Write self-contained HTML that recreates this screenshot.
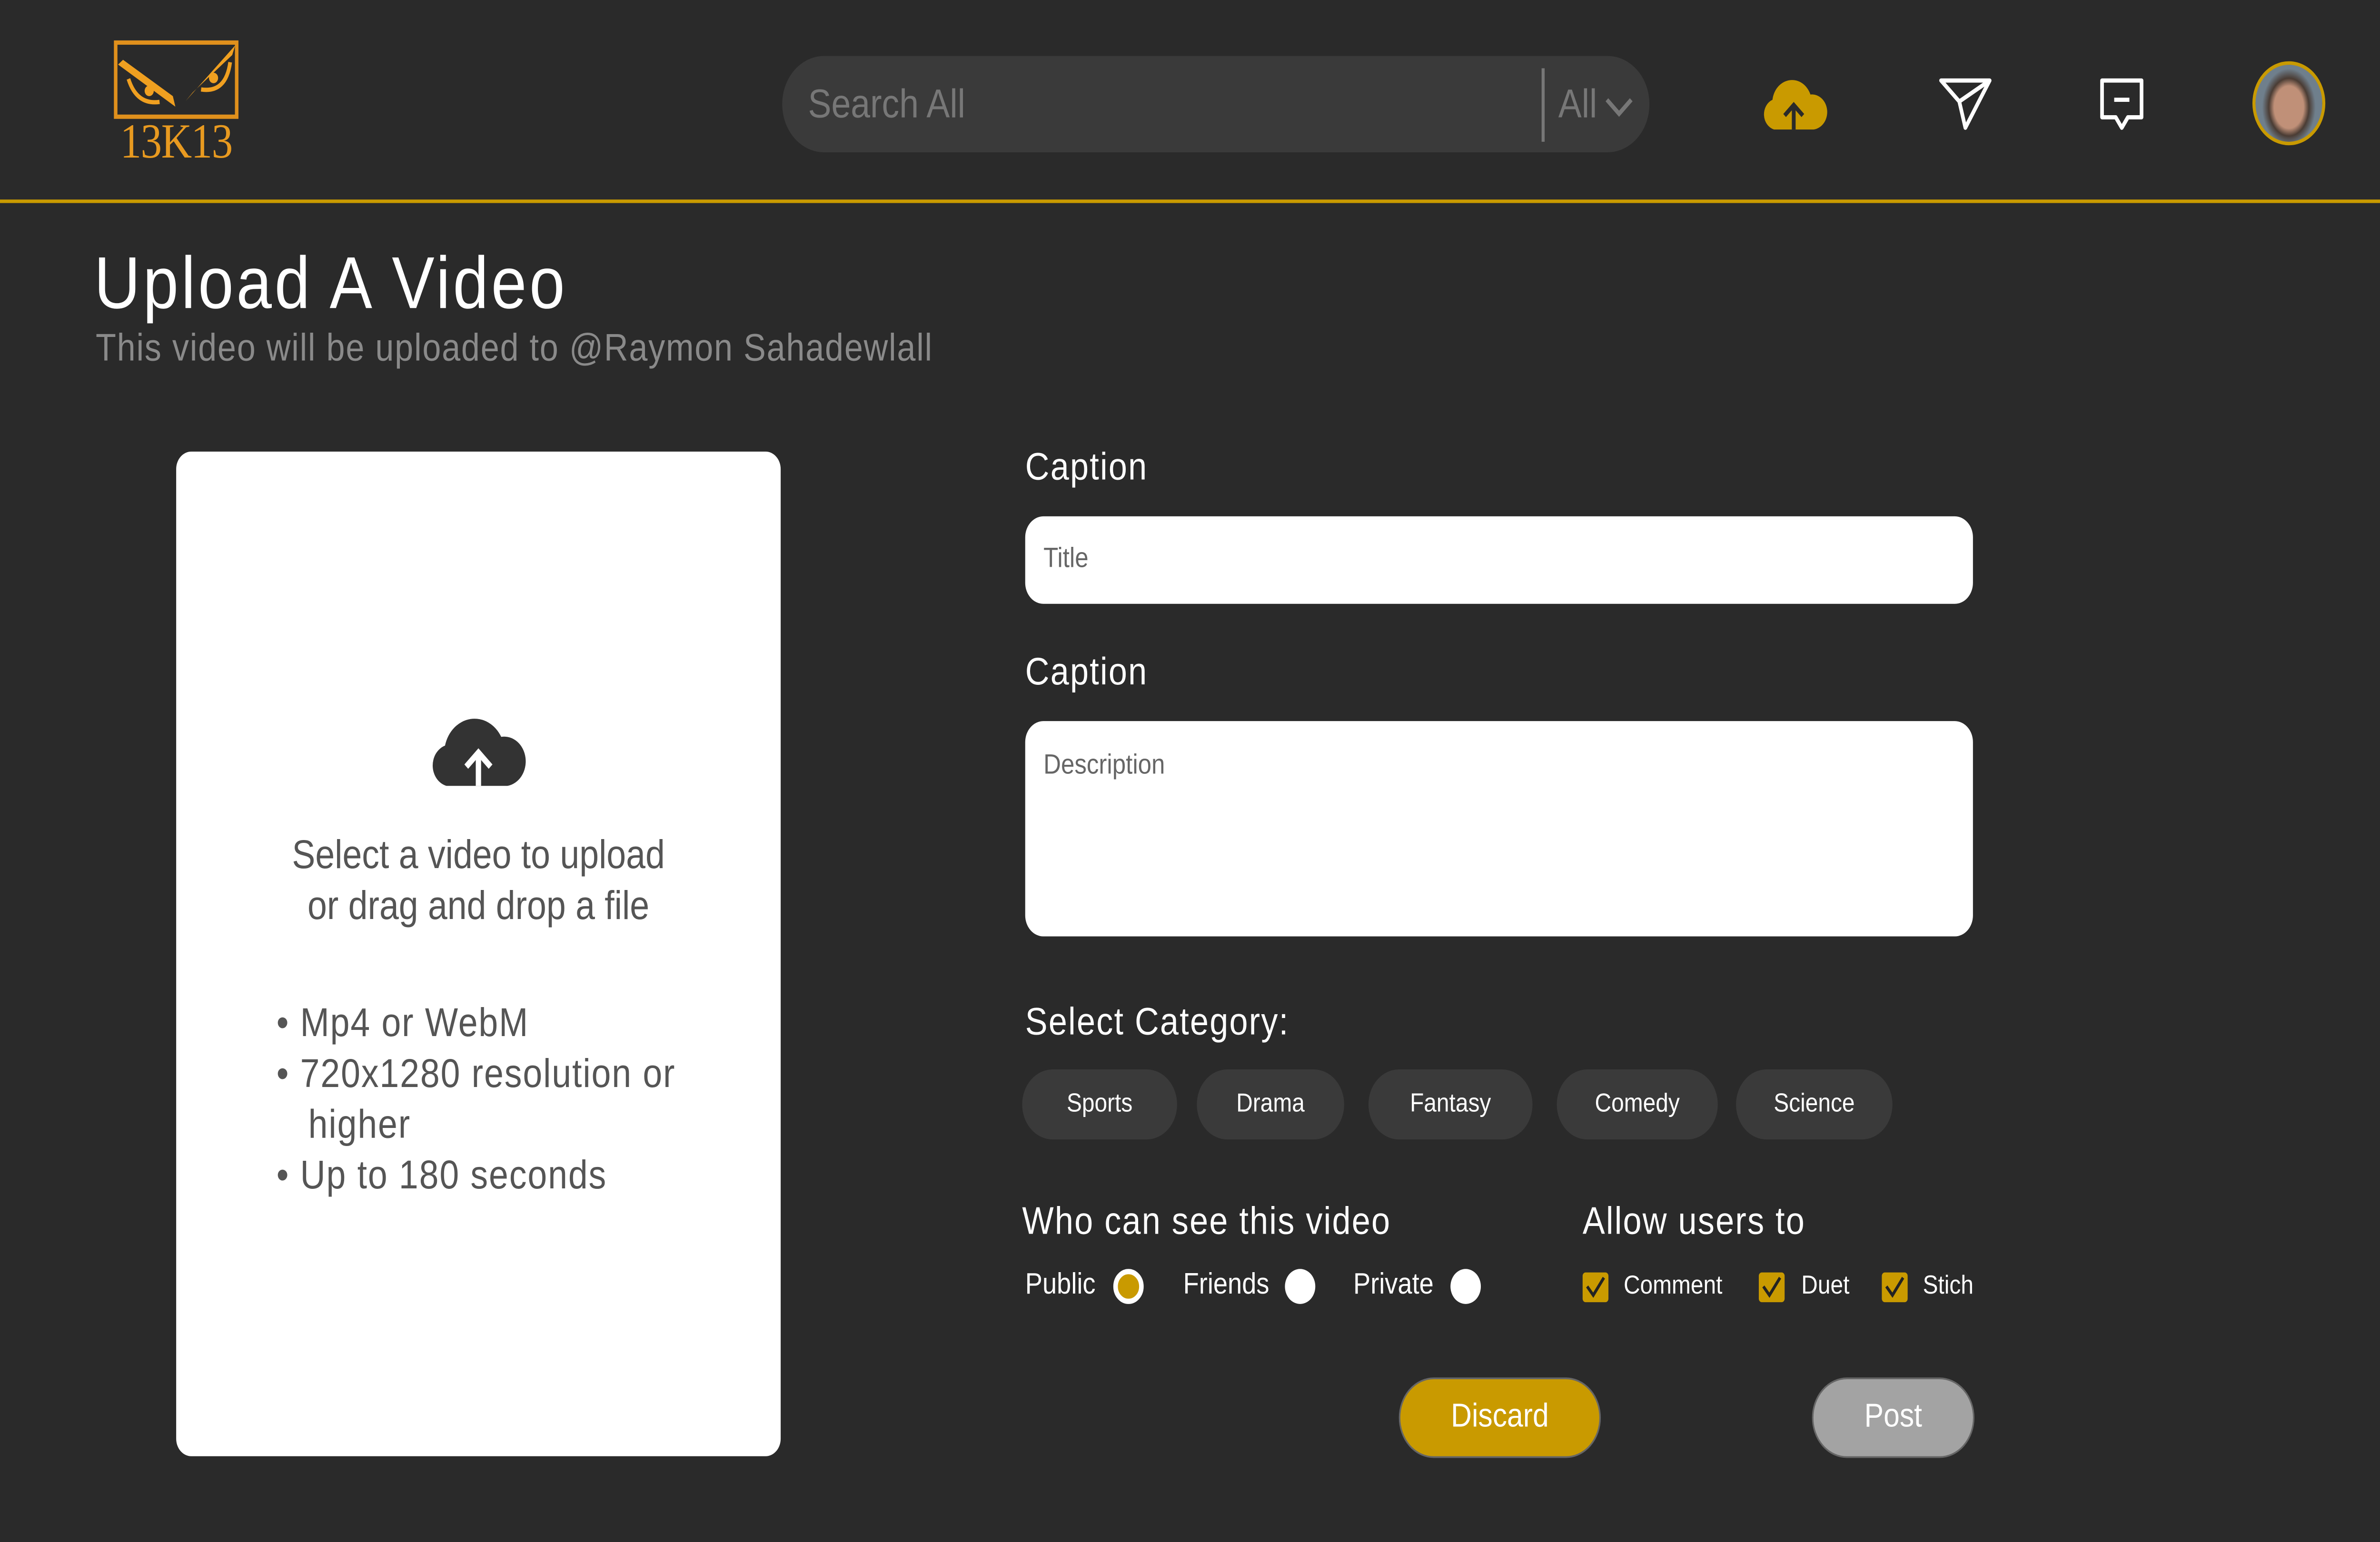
<!DOCTYPE html>
<html><head><meta charset="utf-8"><style>
html,body{margin:0;padding:0;background:#2a2a2a;overflow:hidden;width:100%;height:100%}
#w{width:1567px;height:881px;position:absolute;left:0;top:0;transform:scale(3.6796,3.6776);transform-origin:0 0;font-family:"Liberation Sans",sans-serif;color:#fff}
.a{position:absolute}
.chip{position:absolute;top:611px;height:40px;border-radius:20px;background:#3a3a3a;font-size:15px;line-height:40px;text-align:center}
.lbl{font-size:22px;letter-spacing:0.7px}
.rad{position:absolute;top:725px;width:20px;height:20px;border-radius:50%;background:#fff}
.cb{position:absolute;top:727px;width:17px;height:17px;background:#c99a00;border-radius:2px}
.cb svg{position:absolute;left:2px;top:2px}
.ct{position:absolute;top:726px;font-size:15px}
</style></head><body><div id="w">
<!-- header -->
<div class="a" style="left:0;top:114px;width:1567px;height:2px;background:#c99a00"></div>
<svg class="a" style="left:75px;top:23px" width="82" height="45" viewBox="0 0 300 163"><rect x="4" y="4" width="292" height="155" fill="none" stroke="#e0901c" stroke-width="9"/><path d="M10 50 L148 138 L142 116 L22 40 Z" fill="#f0a020"/><path d="M35 80 Q55 135 110 128" stroke="#f0a020" stroke-width="9" fill="none"/><circle cx="85" cy="105" r="11" fill="#f0a020"/><path d="M292 10 L173 126 L190 108 L285 30 Z" fill="#f0a020"/><path d="M280 45 Q270 110 210 102" stroke="#f0a020" stroke-width="9" fill="none"/><circle cx="240" cy="78" r="11" fill="#f0a020"/></svg>
<div class="a" style="left:74px;top:66px;width:84px;text-align:center;font-family:'Liberation Serif',serif;font-size:28px;color:#e89a20;letter-spacing:-0.5px">13K13</div>
<div class="a" style="left:515px;top:32px;width:571px;height:55px;border-radius:28px;background:#3a3a3a"></div>
<div class="a" style="left:532px;top:46px;font-size:23px;color:#777">Search All</div>
<div class="a" style="left:1015px;top:39px;width:2px;height:42px;background:#777"></div>
<div class="a" style="left:1026px;top:46px;font-size:23px;color:#777">All</div>
<svg class="a" style="left:1056px;top:54px" width="20" height="14"><path d="M2 3 L10 11 L18 3" stroke="#777" stroke-width="2.5" fill="none"/></svg>
<svg class="a" style="left:1158px;top:43px" width="46" height="32" viewBox="0 0 46 32"><path d="M10 31 A9 9 0 0 1 9 14 A13 13 0 0 1 34 11 A10 10 0 0 1 36 31 Z" fill="#c99a00"/><path d="M23 31 V18 M17 23 L23 17 L29 23" stroke="#2a2a2a" stroke-width="2.5" fill="none"/></svg>
<svg class="a" style="left:1276px;top:43px" width="36" height="32" viewBox="0 0 36 32"><path d="M2 3 L34 3 L18 30 L14 15 Z M14 15 L34 3" stroke="#fff" stroke-width="2.4" fill="none" stroke-linejoin="round"/></svg>
<svg class="a" style="left:1382px;top:43px" width="30" height="32" viewBox="0 0 30 32"><path d="M2 3 H28 V24 H19 L15 30 L11 24 H2 Z" stroke="#fff" stroke-width="2.4" fill="none" stroke-linejoin="round"/><path d="M10 14 H20" stroke="#fff" stroke-width="2.4"/></svg>
<div class="a" style="left:1483px;top:35px;width:48px;height:48px;border-radius:50%;border:2px solid #c99a00;box-sizing:border-box;background:radial-gradient(ellipse 40% 50% at 50% 55%,#c09078 0 55%,#4a3c34 75%,#6f7f8c 100%)"></div>
<!-- title -->
<div class="a" style="left:62px;top:138px;font-size:42px;letter-spacing:1.8px">Upload A Video</div>
<div class="a" style="left:63px;top:186px;font-size:22px;color:#8a8a8a;letter-spacing:0.55px">This video will be uploaded to @Raymon Sahadewlall</div>
<!-- drop box -->
<div class="a" style="left:116px;top:258px;width:398px;height:574px;border-radius:10px;background:#fff"></div>
<svg class="a" style="left:280px;top:404px" width="70" height="46" viewBox="0 0 70 46"><path d="M14 45 A12 12 0 0 1 13 22 A20 20 0 0 1 50 17 A14 14 0 0 1 54 45 Z" fill="#333"/><path d="M35 45 V27 M27 34 L35 26 L43 34" stroke="#fff" stroke-width="3.5" fill="none"/></svg>
<div class="a" style="left:116px;top:474px;width:398px;text-align:center;font-size:23px;color:#555;line-height:29px">Select a video to upload<br>or drag and drop a file</div>
<div class="a" style="left:182px;top:570px;font-size:23px;color:#555;line-height:29px;letter-spacing:0.6px">• Mp4 or WebM<br>• 720x1280 resolution or<br>&nbsp;&nbsp; higher<br>• Up to 180 seconds</div>
<!-- form -->
<div class="a lbl" style="left:675px;top:254px">Caption</div>
<div class="a" style="left:675px;top:295px;width:624px;height:50px;border-radius:12px;background:#fff"></div>
<div class="a" style="left:687px;top:311px;font-size:16px;color:#666">Title</div>
<div class="a lbl" style="left:675px;top:371px">Caption</div>
<div class="a" style="left:675px;top:412px;width:624px;height:123px;border-radius:12px;background:#fff"></div>
<div class="a" style="left:687px;top:429px;font-size:16px;color:#666">Description</div>
<div class="a lbl" style="left:675px;top:571px">Select Category:</div>
<div class="chip" style="left:673px;width:102px">Sports</div>
<div class="chip" style="left:788px;width:97px">Drama</div>
<div class="chip" style="left:901px;width:108px">Fantasy</div>
<div class="chip" style="left:1025px;width:106px">Comedy</div>
<div class="chip" style="left:1143px;width:103px">Science</div>
<div class="a lbl" style="left:673px;top:685px">Who can see this video</div>
<div class="a lbl" style="left:1042px;top:685px">Allow users to</div>
<div class="a" style="left:675px;top:724px;font-size:17px">Public</div>
<div class="rad" style="left:733px;background:#c99a00;border:3px solid #fff;box-sizing:border-box"></div>
<div class="a" style="left:779px;top:724px;font-size:17px">Friends</div>
<div class="rad" style="left:846px"></div>
<div class="a" style="left:891px;top:724px;font-size:17px">Private</div>
<div class="rad" style="left:955px"></div>
<div class="cb" style="left:1042px"><svg width="13" height="13"><path d="M1 6 L5 11 L12 1" stroke="#222" stroke-width="1.8" fill="none"/></svg></div>
<div class="ct" style="left:1069px">Comment</div>
<div class="cb" style="left:1158px"><svg width="13" height="13"><path d="M1 6 L5 11 L12 1" stroke="#222" stroke-width="1.8" fill="none"/></svg></div>
<div class="ct" style="left:1186px">Duet</div>
<div class="cb" style="left:1239px"><svg width="13" height="13"><path d="M1 6 L5 11 L12 1" stroke="#222" stroke-width="1.8" fill="none"/></svg></div>
<div class="ct" style="left:1266px">Stich</div>
<div class="a" style="left:921px;top:787px;width:133px;height:46px;border-radius:23px;background:#c99a00;border:1px solid #666;box-sizing:border-box;text-align:center;line-height:44px;font-size:19px">Discard</div>
<div class="a" style="left:1193px;top:787px;width:107px;height:46px;border-radius:23px;background:#a3a3a3;border:1px solid #666;box-sizing:border-box;text-align:center;line-height:44px;font-size:19px">Post</div>
</div>
<script>
(function(){
  var w=document.documentElement.clientWidth||window.innerWidth||5766;
  var h=document.documentElement.clientHeight||window.innerHeight||3240;
  document.getElementById('w').style.transform='scale('+(w/1567)+','+(h/881)+')';
})();
</script>
</body></html>
